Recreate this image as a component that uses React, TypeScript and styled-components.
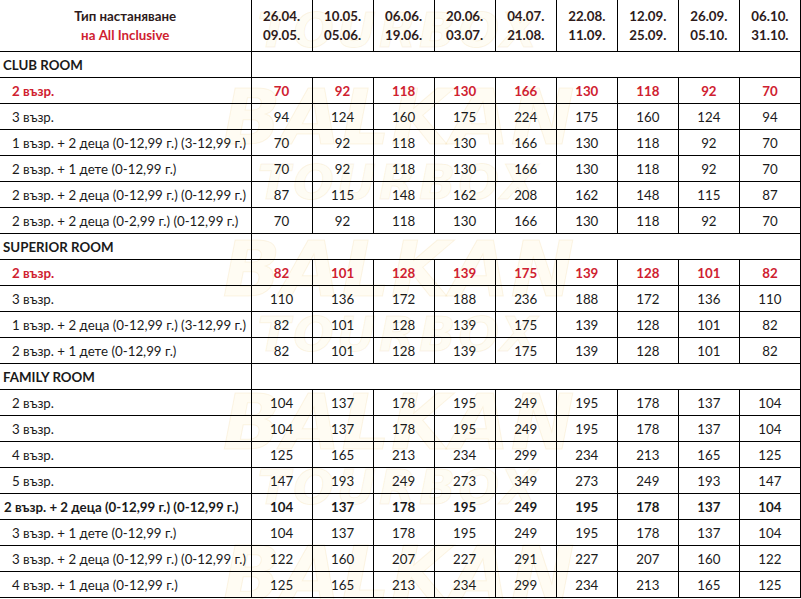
import React from "react";
import styled, { createGlobalStyle } from "styled-components";

const GlobalStyle = createGlobalStyle`
  html, body {
    margin: 0;
    padding: 0;
    background: #ffffff;
  }
  body {
    font-family: Lato, "Liberation Sans", sans-serif;
  }
`;

const Page = styled.div`
  position: relative;
  width: 801px;
  height: 599px;
  overflow: hidden;
  background: #ffffff;
`;

// faint logo watermark that sits behind the price table
const Watermarks = styled.div`
  position: absolute;
  inset: 0;
  pointer-events: none;
  z-index: 0;
`;

const Mark = styled.div`
  position: absolute;
  left: 214px;
  width: 370px;
  display: flex;
  flex-direction: column;
  align-items: center;
  font-family: "DejaVu Sans", sans-serif;
  font-style: italic;
  font-weight: 900;
  color: rgba(252, 225, 140, 0.1);
  -webkit-text-stroke: 1px rgba(230, 190, 110, 0.16);
  line-height: 1;
`;

const MarkTop = styled.span`
  font-size: 76px;
  letter-spacing: 1px;
`;

const MarkBottom = styled.span`
  font-size: 48px;
  letter-spacing: 3px;
  margin-top: 2px;
`;

const Table = styled.table`
  position: relative;
  z-index: 1;
  width: 801px;
  border-collapse: collapse;
  table-layout: fixed;
  font-size: 13.3px;
  color: #1a1a1a;
`;

const Cell = styled.td<{ $red?: boolean; $bold?: boolean }>`
  border: 1px solid #000;
  height: 25px;
  padding: 0;
  text-align: center;
  vertical-align: middle;
  font-weight: ${(p) => (p.$bold || p.$red ? 700 : 400)};
  color: ${(p) => (p.$red ? "#cf2130" : "#1a1a1a")};
  white-space: nowrap;
  &:first-child {
    border-left: none;
  }
`;

const LabelCell = styled(Cell)<{ $indent?: number }>`
  text-align: left;
  padding-left: ${(p) => p.$indent ?? 12}px;
  overflow: hidden;
`;

const HeadCell = styled.th`
  border: 1px solid #000;
  border-top: none;
  height: 51px;
  padding: 0;
  font-weight: 700;
  font-size: 13.3px;
  color: #2e1b1b;
  line-height: 19px;
  vertical-align: middle;
  &:first-child {
    border-left: none;
  }
`;

const RedText = styled.span`
  color: #cf2130;
`;

const SectionCell = styled(Cell)`
  text-align: left;
  padding-left: 3px;
  font-weight: 700;
  color: #1a1a1a;
`;

type Row = {
  label: string;
  values: number[];
  red?: boolean;
  bold?: boolean;
  indent?: number;
};

type Section = { title: string; rows: Row[] };

const periods = [
  ["26.04.", "09.05."],
  ["10.05.", "05.06."],
  ["06.06.", "19.06."],
  ["20.06.", "03.07."],
  ["04.07.", "21.08."],
  ["22.08.", "11.09."],
  ["12.09.", "25.09."],
  ["26.09.", "05.10."],
  ["06.10.", "31.10."],
];

const sections: Section[] = [
  {
    title: "CLUB ROOM",
    rows: [
      { label: "2 възр.", values: [70, 92, 118, 130, 166, 130, 118, 92, 70], red: true },
      { label: "3 възр.", values: [94, 124, 160, 175, 224, 175, 160, 124, 94] },
      { label: "1 възр. + 2 деца (0-12,99 г.) (3-12,99 г.)", values: [70, 92, 118, 130, 166, 130, 118, 92, 70] },
      { label: "2 възр. + 1 дете (0-12,99 г.)", values: [70, 92, 118, 130, 166, 130, 118, 92, 70] },
      { label: "2 възр. + 2 деца (0-12,99 г.) (0-12,99 г.)", values: [87, 115, 148, 162, 208, 162, 148, 115, 87] },
      { label: "2 възр. + 2 деца (0-2,99 г.) (0-12,99 г.)", values: [70, 92, 118, 130, 166, 130, 118, 92, 70] },
    ],
  },
  {
    title: "SUPERIOR ROOM",
    rows: [
      { label: "2 възр.", values: [82, 101, 128, 139, 175, 139, 128, 101, 82], red: true },
      { label: "3 възр.", values: [110, 136, 172, 188, 236, 188, 172, 136, 110] },
      { label: "1 възр. + 2 деца (0-12,99 г.) (3-12,99 г.)", values: [82, 101, 128, 139, 175, 139, 128, 101, 82] },
      { label: "2 възр. + 1 дете (0-12,99 г.)", values: [82, 101, 128, 139, 175, 139, 128, 101, 82] },
    ],
  },
  {
    title: "FAMILY ROOM",
    rows: [
      { label: "2 възр.", values: [104, 137, 178, 195, 249, 195, 178, 137, 104] },
      { label: "3 възр.", values: [104, 137, 178, 195, 249, 195, 178, 137, 104] },
      { label: "4 възр.", values: [125, 165, 213, 234, 299, 234, 213, 165, 125] },
      { label: "5 възр.", values: [147, 193, 249, 273, 349, 273, 249, 193, 147] },
      { label: "2 възр. + 2 деца (0-12,99 г.) (0-12,99 г.)", values: [104, 137, 178, 195, 249, 195, 178, 137, 104], bold: true, indent: 4 },
      { label: "3 възр. + 1 дете (0-12,99 г.)", values: [104, 137, 178, 195, 249, 195, 178, 137, 104] },
      { label: "3 възр. + 2 деца (0-12,99 г.) (0-12,99 г.)", values: [122, 160, 207, 227, 291, 227, 207, 160, 122] },
      { label: "4 възр. + 1 деца (0-12,99 г.)", values: [125, 165, 213, 234, 299, 234, 213, 165, 125] },
    ],
  },
];

const markTops = [-72, 80, 232, 385, 537];

export default function App() {
  return (
    <Page>
      <GlobalStyle />
      <Watermarks aria-hidden="true">
        {markTops.map((top) => (
          <Mark key={top} style={{ top }}>
            <MarkTop>BALKAN</MarkTop>
            <MarkBottom>TOURBOX</MarkBottom>
          </Mark>
        ))}
      </Watermarks>
      <Table>
        <colgroup>
          <col style={{ width: 251 }} />
          {periods.map((_, i) => (
            <col key={i} />
          ))}
        </colgroup>
        <thead>
          <tr>
            <HeadCell>
              Тип настаняване
              <br />
              <RedText>на All Inclusive</RedText>
            </HeadCell>
            {periods.map(([from, to]) => (
              <HeadCell key={from}>
                {from}
                <br />
                {to}
              </HeadCell>
            ))}
          </tr>
        </thead>
        <tbody>
          {sections.map((section) => (
            <React.Fragment key={section.title}>
              <tr>
                <SectionCell>{section.title}</SectionCell>
                <Cell colSpan={9} />
              </tr>
              {section.rows.map((row, i) => (
                <tr key={i}>
                  <LabelCell $red={row.red} $bold={row.bold} $indent={row.indent}>
                    {row.label}
                  </LabelCell>
                  {row.values.map((v, j) => (
                    <Cell key={j} $red={row.red} $bold={row.bold}>
                      {v}
                    </Cell>
                  ))}
                </tr>
              ))}
            </React.Fragment>
          ))}
        </tbody>
      </Table>
    </Page>
  );
}
